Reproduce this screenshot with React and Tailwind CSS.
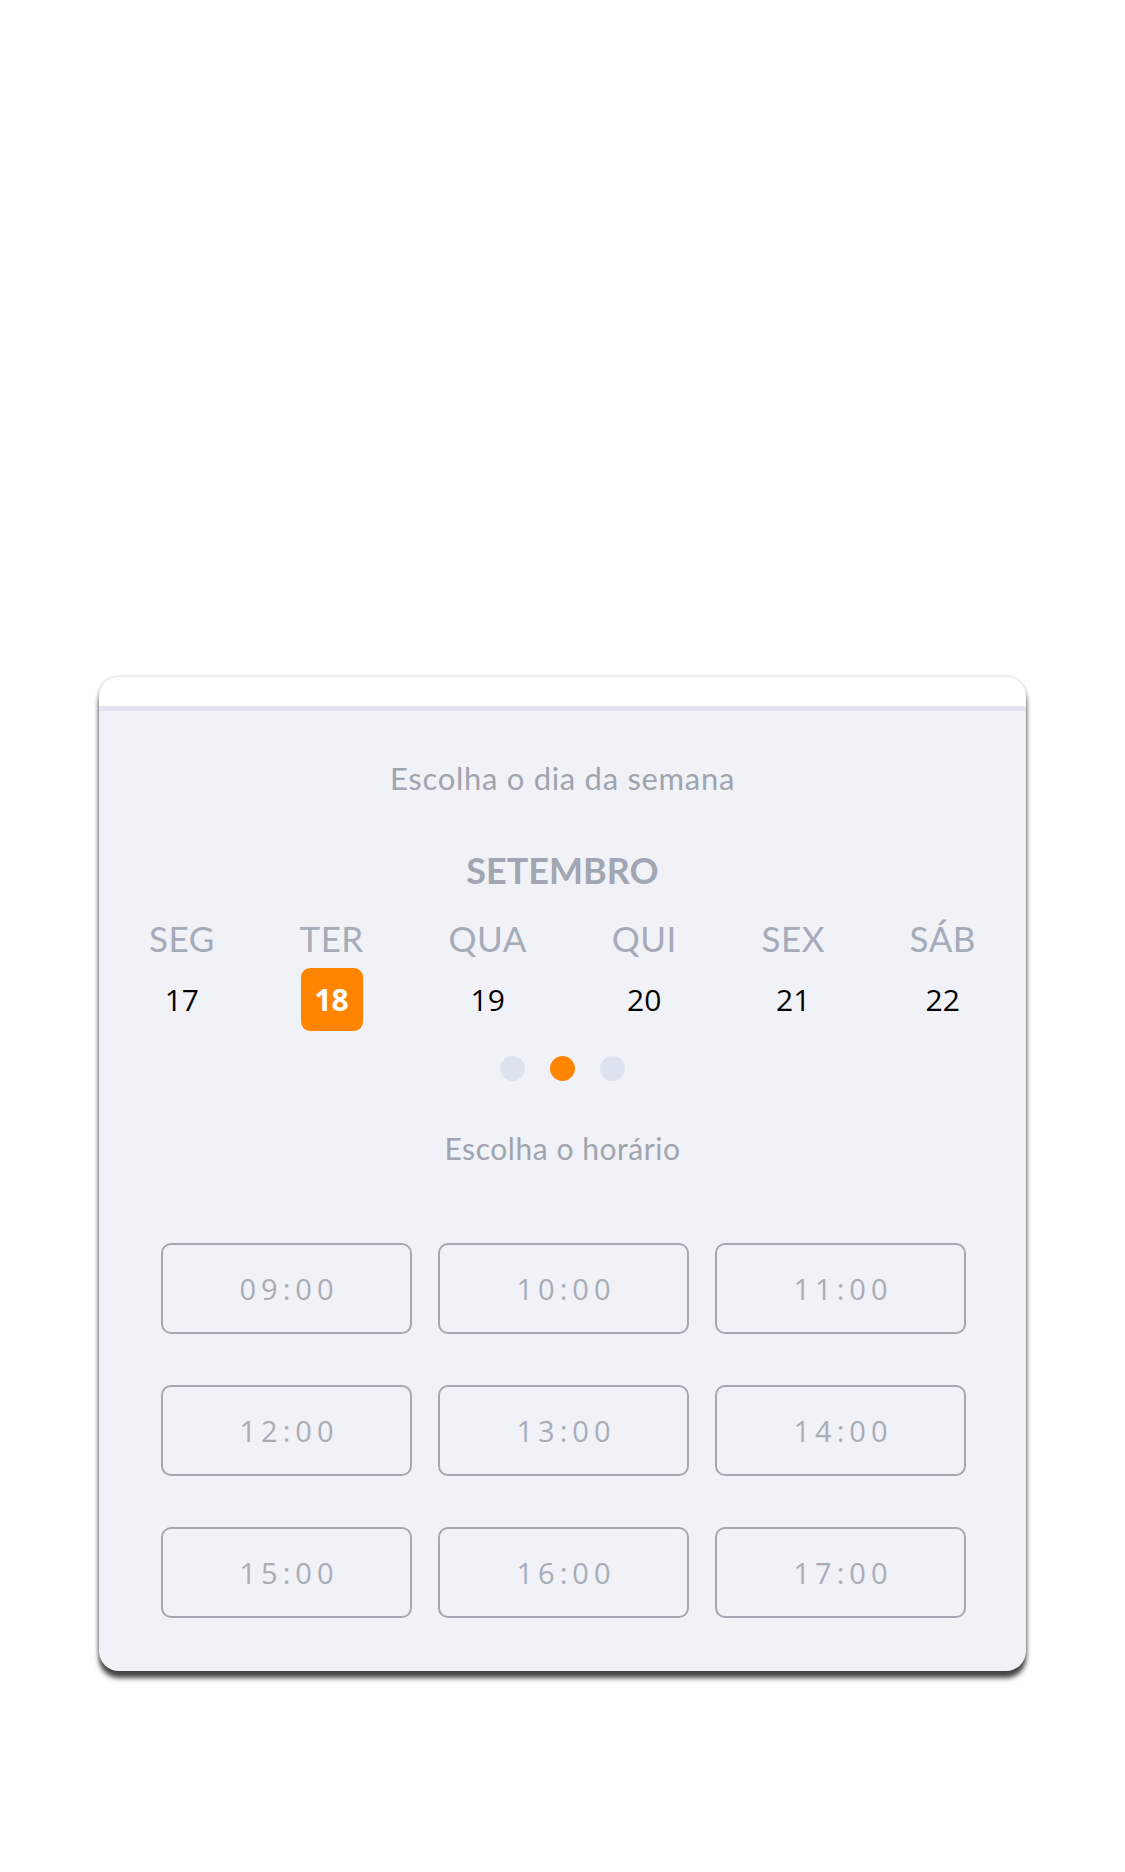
import React from "react";

const days = [
  { l: "SEG", n: "17" },
  { l: "TER", n: "18", active: true },
  { l: "QUA", n: "19" },
  { l: "QUI", n: "20" },
  { l: "SEX", n: "21" },
  { l: "SÁB", n: "22" },
];

const times = ["09:00", "10:00", "11:00", "12:00", "13:00", "14:00", "15:00", "16:00", "17:00"];

export default function App() {
  return (
    <div className="min-h-[1872px] w-full bg-white px-[99px] pt-[677px] font-['Lato',sans-serif]">
      <div className="overflow-hidden rounded-[20px] bg-[#f1f2f7] shadow-[0_7px_5px_rgba(0,0,0,0.72),0_0_4px_rgba(0,0,0,0.22)]">
        <div className="h-[29px] bg-white" />
        <div className="h-[5px] bg-[#dfe4ef]" />
        <div className="flex flex-col items-center pt-[52px] pb-[53px]">
          <div className="text-[31px] leading-[30px] tracking-[0.7px] text-[#a0a4ae]">Escolha o dia da semana</div>
          <div className="mt-[59px] text-[36px] font-bold leading-[36px] text-[#a1a6b2]">SETEMBRO</div>
          <div className="mt-[33px] flex w-full justify-between px-[50px]">
            {days.map((d) => (
              <div key={d.l} className="flex flex-col items-center">
                <div className="text-[35px] leading-[35px] tracking-[0.5px] text-[#a5abb8]">{d.l}</div>
                <div className="mt-[12px] flex h-[63px] items-center justify-center">
                  {d.active ? (
                    <div className="flex h-[63px] w-[62px] items-center justify-center rounded-[9px] bg-[#ff8500] font-['Open_Sans',sans-serif] text-[30px] font-bold leading-[30px] text-white">
                      {d.n}
                    </div>
                  ) : (
                    <div className="font-['Open_Sans',sans-serif] text-[30px] leading-[30px] text-black">{d.n}</div>
                  )}
                </div>
              </div>
            ))}
          </div>
          <div className="mt-[25px] flex gap-[25px]">
            <div className="h-[25px] w-[25px] rounded-full bg-[#dde3ee]" />
            <div className="h-[25px] w-[25px] rounded-full bg-[#ff8500]" />
            <div className="h-[25px] w-[25px] rounded-full bg-[#dde3ee]" />
          </div>
          <div className="mt-[52px] text-[30px] leading-[30px] tracking-[0.55px] text-[#a0a4ae]">Escolha o horário</div>
          <div className="mt-[80px] grid w-full grid-cols-3 gap-x-[26px] gap-y-[51px] pl-[62px] pr-[60px]">
            {times.map((t) => (
              <div
                key={t}
                className="flex h-[91px] items-center justify-center rounded-[10px] border-2 border-[#a3a8b3] pl-[5px] font-['Open_Sans',sans-serif] text-[29px] leading-[29px] tracking-[5px] text-[#a8adb8]"
              >
                {t}
              </div>
            ))}
          </div>
        </div>
      </div>
    </div>
  );
}
